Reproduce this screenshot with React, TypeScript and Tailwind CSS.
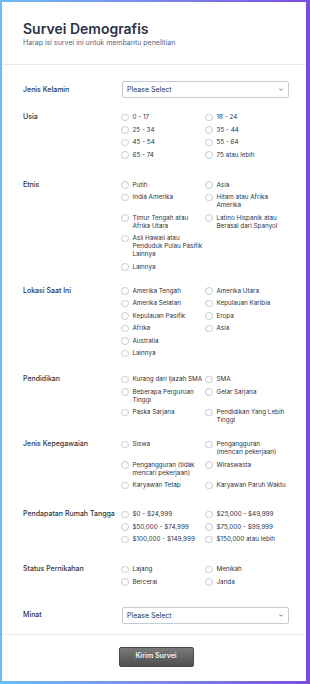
import React from "react";

type Section = {
  label: string;
  options: string[];
  mt: string;
};

const sections: Section[] = [
  { label: "Usia", mt: "mt-[15px]", options: ["0 - 17", "18 - 24", "25 - 34", "35 - 44", "45 - 54", "55 - 64", "65 - 74", "75 atau lebih"] },
  {
    label: "Etnis",
    mt: "mt-[22px]",
    options: [
      "Putih",
      "Asia",
      "India Amerika",
      "Hitam atau Afrika Amerika",
      "Timur Tengah atau Afrika Utara",
      "Latino Hispanik atau Berasal dari Spanyol",
      "Asli Hawaii atau Penduduk Pulau Pasifik Lainnya",
      "",
      "Lainnya",
    ],
  },
  {
    label: "Lokasi Saat Ini",
    mt: "mt-[16px]",
    options: [
      "Amerika Tengah",
      "Amerika Utara",
      "Amerika Selatan",
      "Kepulauan Karibia",
      "Kepulauan Pasifik",
      "Eropa",
      "Afrika",
      "Asia",
      "Australia",
      "",
      "Lainnya",
    ],
  },
  {
    label: "Pendidikan",
    mt: "mt-[18px]",
    options: ["Kurang dari Ijazah SMA", "SMA", "Beberapa Perguruan Tinggi", "Gelar Sarjana", "Paska Sarjana", "Pendidikan Yang Lebih Tinggi"],
  },
  {
    label: "Jenis Kepegawaian",
    mt: "mt-[16px]",
    options: [
      "Siswa",
      "Pengangguran\n(mencari pekerjaan)",
      "Pengangguran (tidak mencari pekerjaan)",
      "Wiraswasta",
      "Karyawan Tetap",
      "Karyawan Paruh Waktu",
    ],
  },
  {
    label: "Pendapatan Rumah Tangga",
    mt: "mt-[21px]",
    options: ["$0 - $24,999", "$25,000 - $49,999", "$50,000 - $74,999", "$75,000 - $99,999", "$100,000 - $149,999", "$150,000 atau lebih"],
  },
  { label: "Status Pernikahan", mt: "mt-[22px]", options: ["Lajang", "Menikah", "Bercerai", "Janda"] },
];

function SelectBox() {
  return (
    <div className="flex h-[17px] w-[167px] items-center justify-between rounded-[2px] border border-[#c3cad8] bg-white pl-[4px] pr-[5px]">
      <span className="text-[7px] leading-[9px] text-[#2c3345]">Please Select</span>
      <svg width="4" height="3" viewBox="0 0 8 5" fill="none">
        <path d="M1 1l3 3 3-3" stroke="#2c3345" strokeWidth="1.3" strokeLinecap="round" strokeLinejoin="round" />
      </svg>
    </div>
  );
}

function Radio({ text }: { text: string }) {
  if (!text) return <div />;
  return (
    <div className="flex items-start gap-[4px]">
      <span className="mt-[0.5px] h-[7.5px] w-[7.5px] shrink-0 rounded-full border border-[#c3cad8] bg-white" />
      <span className="max-w-[72px] whitespace-pre-line text-[6.3px] leading-[8px] text-[#2c3345]">{text}</span>
    </div>
  );
}

export default function App() {
  return (
    <div className="h-[684px] w-[310px] bg-gradient-to-r from-[#6cbdf6] to-[#7b4cdf] pb-[3px] pl-[2px] pr-[4px] pt-[2px] font-[Inter,sans-serif]">
      <div className="flex h-full flex-col bg-white">
        {/* Header */}
        <div className="border-b border-[#e6e9f0] px-[21px] pb-[17px] pt-[18px]">
          <h1 className="text-[14px] font-semibold leading-[17px] text-[#2c3345]">Survei Demografis</h1>
          <p className="mt-[1px] text-[7px] leading-[9px] text-[#57647e]">Harap isi survei ini untuk membantu penelitian</p>
        </div>

        {/* Body */}
        <div className="border-b border-[#e6e9f0] pb-[10px] pl-[21px] pr-[17px] pt-[16px]">
          <div className="flex items-center">
            <div className="w-[99px] text-[7px] font-medium leading-[8px] text-[#2c3345]">Jenis Kelamin</div>
            <SelectBox />
          </div>

          {sections.map((s) => (
            <div key={s.label} className={`flex items-start ${s.mt}`}>
              <div className="w-[99px] text-[7px] font-medium leading-[8px] text-[#2c3345]">{s.label}</div>
              <div className="grid grid-cols-[84px_84px] gap-y-[4.5px]">
                {s.options.map((o, i) => (
                  <Radio key={i} text={o} />
                ))}
              </div>
            </div>
          ))}

          <div className="mt-[21px] flex items-center">
            <div className="w-[99px] text-[7px] font-medium leading-[8px] text-[#2c3345]">Minat</div>
            <SelectBox />
          </div>
        </div>

        {/* Submit */}
        <div className="flex justify-center pl-[4px] pt-[12px]">
          <button className="h-[20px] w-[75px] rounded-[2px] border border-[#4a4a4a] bg-gradient-to-b from-[#7a7a7a] to-[#4f4f4f] text-[7px] font-semibold text-[#f3f3f3]">
            Kirim Survei
          </button>
        </div>
      </div>
    </div>
  );
}
